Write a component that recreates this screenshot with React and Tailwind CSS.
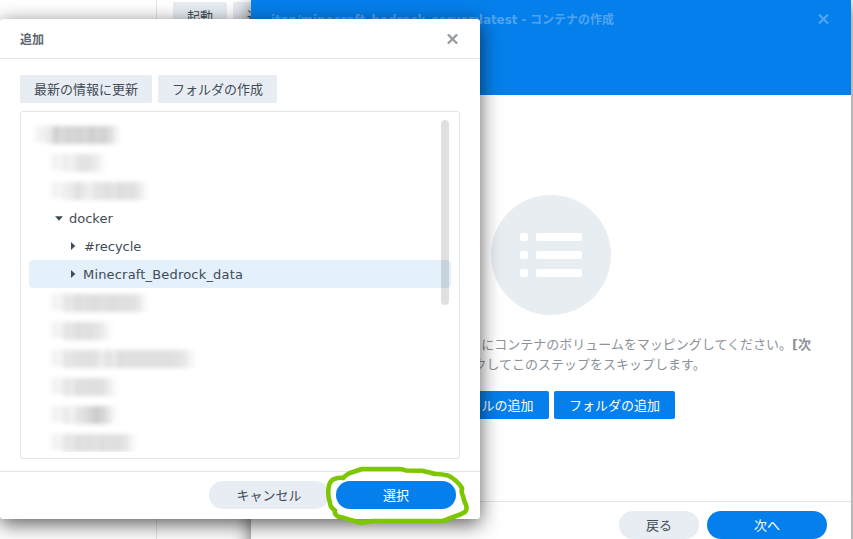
import React from "react";

// Each masked entry: indent and the grey level of every 6px mosaic cell.
const TOP_MASKED = [
  { indent: 6, cells: [243, 240, 232, 208, 218, 212, 214, 210, 216, 206, 214, 210, 220, 242] },
  { indent: 22, cells: [243, 244, 238, 242, 230, 226, 229, 236, 248] },
  { indent: 22, cells: [243, 244, 238, 234, 223, 233, 239, 229, 227, 223, 229, 221, 225, 223, 232, 246] },
];
const BOTTOM_MASKED = [
  { indent: 22, cells: [243, 244, 230, 230, 222, 225, 223, 221, 225, 223, 221, 225, 223, 225, 230, 246] },
  { indent: 22, cells: [243, 244, 229, 229, 222, 225, 223, 228, 234, 247] },
  { indent: 22, cells: [243, 244, 230, 229, 224, 227, 223, 227, 237, 226, 234, 221, 225, 223, 225, 223, 225, 223, 225, 223, 225, 227, 234, 247] },
  { indent: 22, cells: [243, 244, 230, 234, 223, 225, 223, 223, 225, 234, 248] },
  { indent: 22, cells: [243, 244, 234, 242, 229, 224, 214, 204, 212, 228, 248] },
  { indent: 22, cells: [243, 244, 230, 230, 222, 225, 223, 227, 221, 225, 223, 224, 230, 246] },
];

function MaskedRow({ indent, cells }) {
  return (
    <div className="flex h-7 shrink-0 items-center pt-px" style={{ paddingLeft: indent }}>
      <div className="flex blur-[2px]">
        {cells.map((v, i) => (
          <span
            key={i}
            className={i < 2 ? "h-4 w-1.5" : "h-[18px] w-1.5"}
            style={{ backgroundColor: `rgb(${v},${v},${Math.min(255, v + 1)})` }}
          />
        ))}
      </div>
    </div>
  );
}

function Close({ className }) {
  return (
    <svg viewBox="0 0 11 10" className={className} fill="none" stroke="currentColor" strokeWidth="2.2">
      <path d="M0.9 0.4 L10.1 9.6 M10.1 0.4 L0.9 9.6" />
    </svg>
  );
}

function RightArrow() {
  return (
    <svg viewBox="0 0 5 8" className="h-2 w-[5px] fill-[#414b55]">
      <path d="M0 0 L4.3 4 L0 8 Z" />
    </svg>
  );
}

function ListGlyph() {
  return (
    <div className="flex h-[120px] w-[120px] shrink-0 flex-col justify-center gap-2.5 rounded-full bg-[#e8edf2] pl-[29px]">
      {[0, 1, 2].map((i) => (
        <div key={i} className="flex gap-2">
          <span className="h-2 w-2 rounded-xs bg-white" />
          <span className="h-2 w-[46px] rounded-xs bg-white" />
        </div>
      ))}
    </div>
  );
}

function CreateContainerWindow() {
  return (
    <section className="absolute top-0 left-[251px] flex h-[560px] w-[600px] flex-col bg-white shadow-[0_4px_18px_rgba(0,0,0,0.6)]">
      <header className="flex h-[95px] shrink-0 items-start justify-between bg-[#057feb] pr-[22px] pl-5 text-[#4fa4f0]">
        <h1 className="mt-2.5 flex h-5 items-center text-[12px] leading-5 font-bold whitespace-pre">
          <span className="w-[259px] tracking-[-0.06px]">itzg/minecraft_bedrock_server:latest - </span>
          <span>コンテナの作成</span>
        </h1>
        <Close className="mt-3.5 h-2.5 w-[11px]" />
      </header>
      <div className="flex flex-1 flex-col items-center pt-[100px]">
        <ListGlyph />
        <div className="mt-5 w-[520px] text-[13px] leading-5 whitespace-nowrap text-[#8b9299]">
          <p className="flex h-5 justify-end overflow-hidden">
            <span>ファイルまたは共有フォルダ にコンテナのボリュームをマッピングしてください。<b>[次</b></span>
          </p>
          <p className="h-5 pl-0.5 text-center"><b>へ]</b> をクリックしてこのステップをスキップします。</p>
        </div>
        <div className="mt-4 flex gap-[5px] text-[13px] text-white">
          <button className="h-7 w-[122px] rounded-[2px] bg-[#057feb] pt-px">ファイルの追加</button>
          <button className="h-7 w-[121px] rounded-[2px] bg-[#057feb] pt-px">フォルダの追加</button>
        </div>
      </div>
      <footer className="flex h-[59px] shrink-0 items-start justify-end gap-2 border-t border-[#dfe6ec] pt-[9px] pr-6 text-[13px]">
        <button className="h-7 w-20 rounded-full bg-[#e8edf4] pt-px text-[#414b55]">戻る</button>
        <button className="h-7 w-[120px] rounded-full bg-[#057feb] pt-px text-white">次へ</button>
      </footer>
    </section>
  );
}

function AddDialog() {
  return (
    <section className="absolute top-[19px] left-0 flex h-[500px] w-[480px] flex-col rounded-[3px] bg-white shadow-[0_5px_20px_rgba(0,0,0,0.65)]">
      <header className="flex h-10 shrink-0 items-center justify-between border-b border-[#dfe6ec] pt-px pr-[22px] pl-5">
        <h2 className="pt-0.5 text-[12px] font-bold text-[#5b656f]">追加</h2>
        <Close className="h-2.5 w-[11px] text-[#969ba0]" />
      </header>
      <div className="flex flex-1 flex-col px-5 pt-4">
        <div className="flex gap-1.5 text-[13px]">
          <button className="h-7 w-[132px] rounded-[2px] bg-[#e8edf4] pt-0.5">最新の情報に更新</button>
          <button className="h-7 w-[119px] rounded-[2px] bg-[#e8edf4] pt-0.5">フォルダの作成</button>
        </div>
        <div className="mt-2 flex h-[348px] items-start rounded-[3px] border border-[#dfe6ec] py-2 pr-2 pl-2">
          <div className="flex h-[332px] w-[422px] shrink-0 flex-col overflow-hidden text-[13px]">
            {TOP_MASKED.map((r, i) => <MaskedRow key={i} {...r} />)}
            <div className="flex h-7 shrink-0 items-center pl-[26px]">
              <svg viewBox="0 0 8 5" className="h-[5px] w-2 fill-[#414b55]"><path d="M0 0.3 H8 L4 4.7 Z" /></svg>
              <span className="ml-1.5 pt-0.5">docker</span>
            </div>
            <div className="flex h-7 shrink-0 items-center pl-[42px]">
              <RightArrow />
              <span className="ml-2 pt-0.5 tracking-[-0.05px]">#recycle</span>
            </div>
            <div className="flex h-7 shrink-0 items-center rounded-[4px] bg-[#e4f0fc] pl-[42px]">
              <RightArrow />
              <span className="ml-[7px] pt-0.5 tracking-[0.18px]">Minecraft_Bedrock_data</span>
            </div>
            {BOTTOM_MASKED.map((r, i) => <MaskedRow key={i} {...r} />)}
          </div>
          <div className="relative -ml-2.5 h-[185px] w-2 shrink-0 rounded-full bg-black/12" />
        </div>
      </div>
      <footer className="flex h-12 shrink-0 items-start justify-end gap-[7px] border-t border-[#dfe6ec] pt-[9px] pr-6 text-[13px]">
        <button className="h-7 w-[120px] rounded-full bg-[#e8edf4] pt-px">キャンセル</button>
        <button className="h-7 w-[120px] rounded-full bg-[#057feb] pt-px text-white">選択</button>
      </footer>
    </section>
  );
}

export default function App() {
  return (
    <main className="relative h-[539px] w-[853px] overflow-hidden bg-white font-['DejaVu_Sans','Noto_Sans_CJK_JP',sans-serif] text-[#414b55]">
      <div className="flex h-full">
        <div className="w-[157px] border-r border-[#dfe6ec]" />
        <div className="flex gap-1.5 pt-0.5 pl-4 text-[13px]">
          <button className="h-7 w-[54px] rounded-[2px] bg-[#e8edf4] pt-px">起動</button>
          <button className="h-7 w-[54px] rounded-[2px] bg-[#e8edf4] pt-px">追加</button>
        </div>
      </div>
      <CreateContainerWindow />
      <AddDialog />
      <svg viewBox="0 0 853 539" className="pointer-events-none absolute inset-0 h-full w-full" fill="none">
        <path
          d="M362 469 H399 Q403 469 406 470.5 L422 470.7 Q429 472 435 474 Q442 474 448 475.5 Q457 480 462 488 Q461 493 463 496 Q464 501 466 505 Q467.5 509 465 512 Q460 515 456 516 L443 521 H373 Q366 522 361 523 Q348 519 338 516.5 Q334 514 335 510.5 Q330 507 330 503 Q327.5 495 328.5 489 Q329 482 333 479.5 Q338 477 343 478 Q348 473 353 472 Z"
          stroke="#7dc700"
          strokeWidth="4.6"
          strokeLinejoin="round"
        />
      </svg>
    </main>
  );
}
